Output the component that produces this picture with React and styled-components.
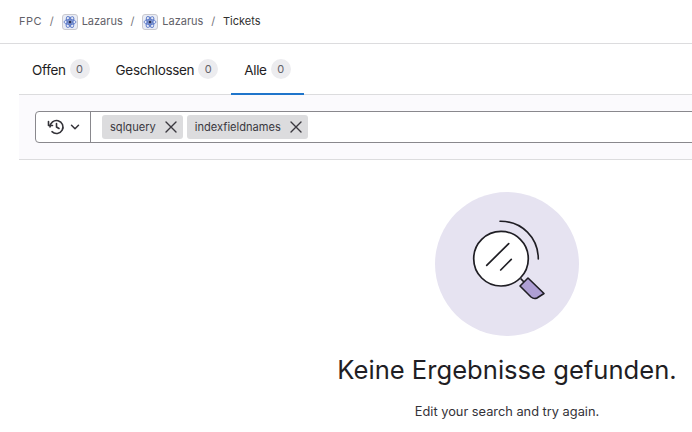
import React from "react"
import styled, { createGlobalStyle } from "styled-components"

const GlobalStyle = createGlobalStyle`
  html, body {
    margin: 0;
    padding: 0;
    background: #fff;
    overflow: hidden;
  }
  body {
    font-family: Inter, "Noto Sans", sans-serif;
    color: #1f1e24;
  }
`

const Page = styled.div`
  width: 692px;
  height: 432px;
  overflow: hidden;
`

const Breadcrumbs = styled.nav`
  height: 44px;
  box-sizing: border-box;
  padding: 0 0 2px 19px;
  display: flex;
  align-items: center;
  font-size: 11px;
  color: #626168;
  border-bottom: 1px solid #dcdcde;
`

const Crumb = styled.span`
  display: flex;
  align-items: center;
  gap: 4px;
  color: ${props => props.$current ? "#303030" : "#626168"};
`

const RootCrumb = styled(Crumb)`
  letter-spacing: 0.5px;
`

const Separator = styled.span`
  margin: 0 7.8px;
  color: #737278;
`

const Avatar = styled.svg`
  width: 16px;
  height: 16px;
  margin-top: 2px;
  display: block;
`

const Content = styled.div`
  margin-left: 19px;
`

const Tabs = styled.div`
  height: 51px;
  box-sizing: border-box;
  display: flex;
  border-bottom: 1px solid #dcdcde;
`

const Tab = styled.div`
  display: flex;
  align-items: center;
  gap: 4px;
  box-sizing: border-box;
  height: 51px;
  padding: 0 13px;
  font-size: 13.5px;
  letter-spacing: -0.33px;
  color: #1f1e24;
  box-shadow: ${props => props.$active ? "inset 0 -2px 0 #1f75cb" : "none"};
`

const Count = styled.span`
  width: 20px;
  height: 20px;
  margin-top: -2px;
  border-radius: 50%;
  background: #ececef;
  color: #626168;
  font-size: 11px;
  letter-spacing: 0;
  display: flex;
  align-items: center;
  justify-content: center;
`

const FilterBar = styled.div`
  height: 65px;
  box-sizing: border-box;
  background: #fbfafd;
  border-bottom: 1px solid #dcdcde;
  padding: 16px 0 0 16px;
`

const SearchBox = styled.div`
  display: flex;
  height: 32px;
  box-sizing: border-box;
  width: 680px;
  background: #fff;
  border: 1px solid #89888d;
  border-radius: 4px;
`

const HistoryButton = styled.div`
  width: 54px;
  flex: none;
  display: flex;
  align-items: center;
  justify-content: center;
  gap: 5px;
  border-right: 1px solid #89888d;
  color: #333238;
`

const Tokens = styled.div`
  display: flex;
  align-items: center;
  gap: 4px;
  padding-left: 11px;
`

const Token = styled.div`
  height: 24px;
  box-sizing: border-box;
  display: flex;
  align-items: center;
  gap: 7px;
  padding: 0 4px 0 8px;
  background: #dcdcde;
  border-radius: 3px;
  font-size: 11.1px;
  color: #3a383f;
`

const Empty = styled.div`
  display: flex;
  flex-direction: column;
  align-items: center;
  width: 976px;
  padding-top: 32px;
  margin-left: 19px;
`

const Illustration = styled.svg`
  width: 144px;
  height: 144px;
  display: block;
`

const Title = styled.h1`
  margin: 16px 0 0;
  font-size: 25.6px;
  line-height: 36px;
  font-weight: 400;
  color: #1f1e24;
  white-space: nowrap;
`

const Note = styled.p`
  margin: 16px 0 0;
  font-size: 12.8px;
  line-height: 16px;
  color: #333238;
`

const ProjectIcon = () => (
  <Avatar viewBox="0 0 16 16">
    <rect x="0.5" y="0.5" width="15" height="15" rx="2.5" fill="#e9ecf5" stroke="#c9c9cf" />
    <path d="M8 2l1.4 3.4L13 4.5l-1.6 3.5L13 11.5l-3.6-.9L8 14l-1.4-3.4L3 11.5l1.6-3.5L3 4.5l3.6.9z" fill="#a9bbe6" />
    <g fill="none" stroke="#5f7cc8" strokeWidth="0.9">
      <ellipse cx="8" cy="8" rx="6" ry="2.4" />
      <ellipse cx="8" cy="8" rx="6" ry="2.4" transform="rotate(60 8 8)" />
      <ellipse cx="8" cy="8" rx="6" ry="2.4" transform="rotate(120 8 8)" />
    </g>
    <circle cx="8" cy="8" r="1.5" fill="#27305c" />
  </Avatar>
)

const CloseIcon = () => (
  <svg width="16" height="16" viewBox="0 0 16 16" fill="none" stroke="#3a383f" strokeWidth="1.4" strokeLinecap="round">
    <path d="M3 3l10 10M13 3L3 13" />
  </svg>
)

export default function App() {
  return (
    <Page>
      <GlobalStyle />
      <Breadcrumbs>
        <RootCrumb>FPC</RootCrumb>
        <Separator>/</Separator>
        <Crumb><ProjectIcon />Lazarus</Crumb>
        <Separator>/</Separator>
        <Crumb><ProjectIcon />Lazarus</Crumb>
        <Separator>/</Separator>
        <Crumb $current>Tickets</Crumb>
      </Breadcrumbs>
      <Content>
        <Tabs>
          <Tab>Offen <Count>0</Count></Tab>
          <Tab>Geschlossen <Count>0</Count></Tab>
          <Tab $active>Alle <Count>0</Count></Tab>
        </Tabs>
        <FilterBar>
          <SearchBox>
            <HistoryButton>
              <svg width="18" height="18" viewBox="0 0 18 18" fill="none" stroke="#333238" strokeWidth="1.6" strokeLinecap="round" strokeLinejoin="round">
                <path d="M3 9a6.5 6.5 0 1 1 2 4.7" />
                <path d="M1.5 3.5v4h4" />
                <path d="M9.5 5.5V9l2.5 1.5" />
              </svg>
              <svg width="10" height="10" viewBox="0 0 10 10" fill="none" stroke="#333238" strokeWidth="1.5" strokeLinecap="round" strokeLinejoin="round">
                <path d="M1.5 3.2L5 6.7l3.5-3.5" />
              </svg>
            </HistoryButton>
            <Tokens>
              <Token>sqlquery <CloseIcon /></Token>
              <Token>indexfieldnames <CloseIcon /></Token>
            </Tokens>
          </SearchBox>
        </FilterBar>
      </Content>
      <Empty>
        <Illustration viewBox="0 0 144 144">
          <circle cx="72" cy="72" r="72" fill="#e6e3f1" />
          <path d="M65 29.3C87 29 103.3 46 103.3 67" fill="none" stroke="#1f1e24" strokeWidth="1.6" strokeLinecap="round" />
          <circle cx="66" cy="66.7" r="27.3" fill="#fff" stroke="#1f1e24" strokeWidth="1.7" />
          <path d="M51.7 73.3L73.7 51.7M65.7 78L76.3 67.3" fill="none" stroke="#1f1e24" strokeWidth="1.7" strokeLinecap="round" />
          <path d="M85.7 86.7l3.3 3.3" stroke="#1f1e24" strokeWidth="1.7" />
          <path d="M93 86L109 101.5L102 106Q99 107.5 96 105L85 94z" fill="#ae9fd4" stroke="#1f1e24" strokeWidth="1.6" strokeLinejoin="round" />
        </Illustration>
        <Title>Keine Ergebnisse gefunden.</Title>
        <Note>Edit your search and try again.</Note>
      </Empty>
    </Page>
  )
}
